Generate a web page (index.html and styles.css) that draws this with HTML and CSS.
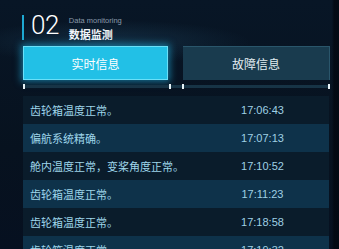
FILE: index.html
```html
<!DOCTYPE html>
<html>
<head>
<meta charset="utf-8">
<link rel="stylesheet" href="styles.css">
</head>
<body>
<div class="page">
  <div class="header">
    <div class="bar"></div>
    <div class="num">02</div>
    <div class="titles">
      <div class="en">Data monitoring</div>
      <div class="cn">数据监测</div>
    </div>
  </div>
  <div class="tabs">
    <div class="tab active">实时信息</div>
    <div class="tab">故障信息</div>
  </div>
  <div class="rule">
    <span class="tick t1"></span>
    <span class="tick t2"></span>
    <span class="tick t3"></span>
    <span class="tick t4"></span>
  </div>
  <div class="list">
    <div class="row"><span class="msg">齿轮箱温度正常。</span><span class="time">17:06:43</span></div>
    <div class="row hl"><span class="msg">偏航系统精确。</span><span class="time">17:07:13</span></div>
    <div class="row"><span class="msg">舱内温度正常，变桨角度正常。</span><span class="time">17:10:52</span></div>
    <div class="row hl"><span class="msg">齿轮箱温度正常。</span><span class="time">17:11:23</span></div>
    <div class="row"><span class="msg">齿轮箱温度正常。</span><span class="time">17:18:58</span></div>
    <div class="row hl"><span class="msg">齿轮箱温度正常。</span><span class="time">17:19:32</span></div>
  </div>
</div>
</body>
</html>
```
FILE: styles.css
```css
html, body {
  margin: 0;
  padding: 0;
}
body {
  width: 339px;
  height: 249px;
  overflow: hidden;
  background: #07121f;
  font-family: "Noto Sans CJK SC", "Liberation Sans", sans-serif;
}
.page {
  width: 339px;
  height: 249px;
  overflow: hidden;
  box-sizing: border-box;
  padding-left: 23px;
  background:
    linear-gradient(to right, rgba(0,0,0,0) 0, rgba(0,0,0,0) 332px, rgba(2,6,14,0.7) 334px),
    radial-gradient(ellipse 140px 22px at 110px 42px, rgba(40,90,120,0.35), rgba(0,0,0,0)),
    linear-gradient(#081626, #07121f 60%, #061020);
}
.header {
  display: flex;
  align-items: flex-start;
  padding-top: 15px;
  margin-left: -1px;
  height: 46px;
  box-sizing: border-box;
}
.bar {
  width: 2px;
  height: 25px;
  background: #1ea9d2;
}
.num {
  margin-left: 7px;
  font-family: Roboto, "Liberation Sans", sans-serif;
  font-weight: 300;
  font-size: 26px;
  line-height: 20px;
  color: #ffffff;
  letter-spacing: -0.5px;
}
.titles {
  margin-left: 10px;
  display: flex;
  flex-direction: column;
}
.en {
  font-family: "Liberation Sans", sans-serif;
  font-size: 7.5px;
  line-height: 8px;
  color: #8a9aab;
  margin-top: 2px;
}
.cn {
  font-size: 11px;
  line-height: 12px;
  font-weight: 700;
  color: #f2f6fa;
  margin-top: 3px;
}
.tabs {
  display: flex;
  gap: 15px;
  width: 307px;
}
.tab {
  height: 34px;
  display: flex;
  align-items: center;
  justify-content: center;
  font-size: 12px;
  color: #e8f2f6;
  box-sizing: border-box;
}
.tab:first-child {
  width: 145px;
}
.tab:last-child {
  width: 147px;
  background: #193b4e;
  border-top: 1px solid #2a566b;
  border-right: 1px solid #2a566b;
  color: #e2edf2;
}
.tab.active {
  background: #22c0e6;
  border: 1px solid #6ae0f8;
  box-shadow: 0 0 7px 2px rgba(30,170,220,0.6);
  color: #ffffff;
}
.rule {
  position: relative;
  margin-top: 5px;
  width: 307px;
  height: 3px;
  background: #173446;
}
.tick {
  position: absolute;
  top: -1px;
  width: 2px;
  height: 5px;
  background: #e6f2f6;
}
.t1 { left: 0; }
.t2 { left: 146px; }
.t3 { left: 159px; }
.t4 { left: 305px; }
.list {
  margin-top: 8px;
  width: 306px;
}
.row {
  display: flex;
  height: 28px;
  align-items: center;
  background: #0a1c2b;
}
.row.hl {
  background: #0e324a;
}
.msg {
  flex: 1;
  padding-left: 7px;
  font-size: 11px;
  color: #9fd6ea;
  white-space: nowrap;
}
.time {
  width: 133px;
  text-align: center;
  font-family: "Liberation Sans", sans-serif;
  font-size: 11px;
  color: #9fd0e4;
}
```
